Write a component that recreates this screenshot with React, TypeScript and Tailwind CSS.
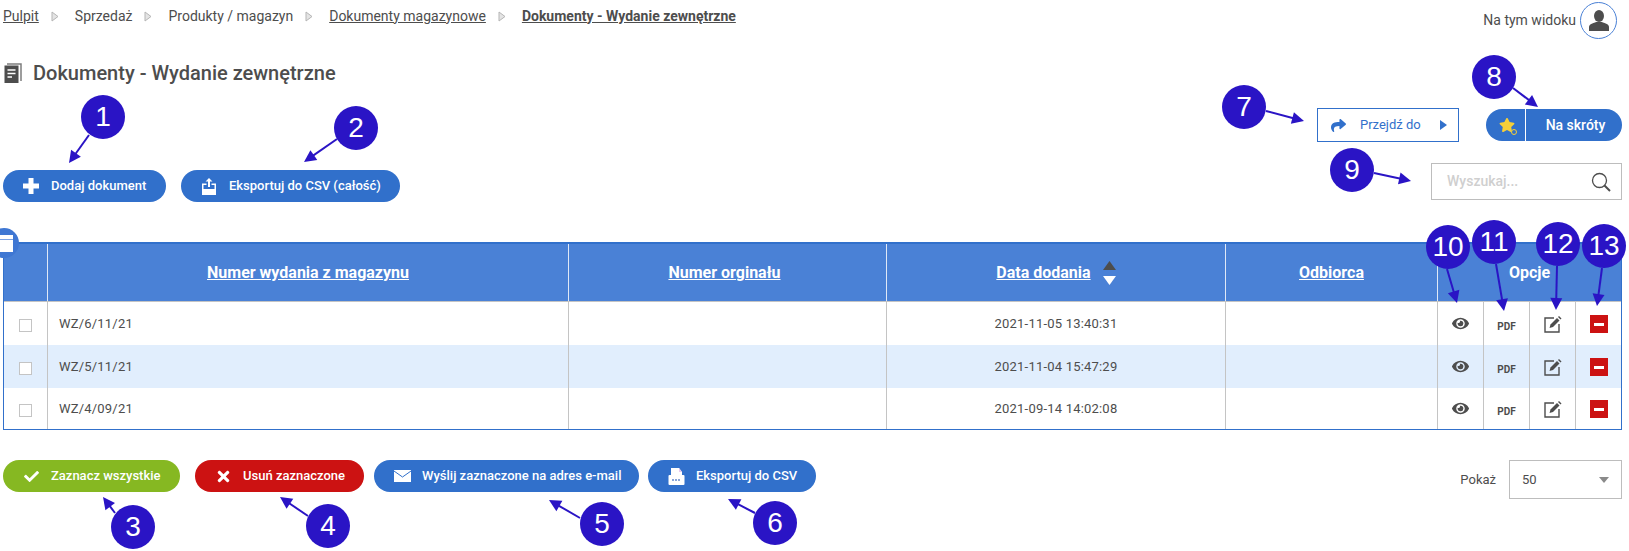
import React from "react";
import { FaShare, FaEye, FaStar, FaCheck, FaTimes } from "react-icons/fa";

const Sep = () => (
  <svg width="8" height="11" viewBox="0 0 8 11" className="ml-[12px] mr-[16px] shrink-0">
    <path d="M1 1 L7 5.5 L1 10 Z" fill="#e4e4e4" stroke="#b5b5b5" strokeWidth="1" />
  </svg>
);

const Btn = ({ w, bg, icon, children }: { w: string; bg: string; icon: React.ReactNode; children: React.ReactNode }) => (
  <button className={`flex h-8 items-center rounded-full text-[13px] font-medium text-white ${w} ${bg}`}>
    <span className="flex w-[48px] shrink-0 items-center justify-center pl-[8px]">{icon}</span>
    <span className="whitespace-nowrap">{children}</span>
  </button>
);

const PlusIcon = () => (
  <svg width="16" height="16" viewBox="0 0 16 16" fill="white">
    <path d="M5.5 0 H10.5 V5.5 H16 V10.5 H10.5 V16 H5.5 V10.5 H0 V5.5 H5.5 Z" />
  </svg>
);

const ExportIcon = () => (
  <svg width="16" height="17" viewBox="0 0 16 17" fill="white">
    <path d="M8 0 L11.5 3.5 H9 V9 H7 V3.5 H4.5 Z" />
    <path d="M1 5.5 H5.5 V7 H2.5 V11 H13.5 V7 H10.5 V5.5 H15 V17 H1 Z" />
  </svg>
);

const MailIcon = () => (
  <svg width="17" height="12" viewBox="0 0 17 12">
    <rect width="17" height="12" fill="white" />
    <path d="M0 1 L8.5 7 L17 1" fill="none" stroke="#3170cb" strokeWidth="1" />
  </svg>
);

const CsvIcon = () => (
  <svg width="17" height="17" viewBox="0 0 17 17">
    <path d="M3 0 H11 L14 4 V7 H3 Z" fill="white" />
    <path d="M11 0 L14 4 H11 Z" fill="#e8c8ee" />
    <rect x="0.5" y="7" width="16" height="10" rx="1" fill="white" />
    <path d="M4 12 H13" stroke="#8aa6d8" strokeWidth="2" strokeDasharray="2 1" />
  </svg>
);

const BookIcon = () => (
  <svg width="18" height="20" viewBox="0 0 18 20" className="shrink-0">
    <path d="M3 1 H17 V18" fill="none" stroke="#7d7d7d" strokeWidth="1.5" />
    <rect x="0.5" y="2.5" width="14" height="17.5" fill="#4d4d4d" />
    <path d="M3.5 7 H11.5 M3.5 10.5 H11.5 M3.5 14 H8" stroke="white" strokeWidth="1.3" />
  </svg>
);

const EditIcon = () => (
  <svg width="18" height="17" viewBox="0 0 18 17">
    <path d="M10 2 H1 V16 H15 V8" fill="none" stroke="#4d4d4d" strokeWidth="1.4" />
    <path d="M5.5 12 L6.5 8.5 L13 2 L15.5 4.5 L9 11 Z" fill="#4d4d4d" />
    <path d="M14 1 L15 0 L17.5 2.5 L16.5 3.5 Z" fill="#4d4d4d" />
  </svg>
);

const MinusIcon = () => (
  <span className="flex h-[18px] w-[18px] items-center justify-center bg-[#cc1212]">
    <span className="h-[3px] w-[10px] bg-white" />
  </span>
);

type BadgeDef = { n: number; cx: number; cy: number; from: [number, number]; to: [number, number] };
const badges: BadgeDef[] = [
  { n: 1, cx: 103, cy: 117, from: [89, 135], to: [69, 163] },
  { n: 2, cx: 356, cy: 128, from: [337, 139], to: [304, 162] },
  { n: 3, cx: 133, cy: 527, from: [115, 513], to: [103, 497] },
  { n: 4, cx: 328, cy: 526, from: [308, 516], to: [280, 497] },
  { n: 5, cx: 602, cy: 524, from: [580, 518], to: [549, 500] },
  { n: 6, cx: 775, cy: 523, from: [755, 513], to: [728, 499] },
  { n: 7, cx: 1244, cy: 107, from: [1266, 111], to: [1304, 121] },
  { n: 8, cx: 1494, cy: 77, from: [1513, 88], to: [1538, 107] },
  { n: 9, cx: 1352, cy: 170, from: [1374, 173], to: [1411, 181] },
  { n: 10, cx: 1448, cy: 247, from: [1447, 269], to: [1457, 303] },
  { n: 11, cx: 1494, cy: 242, from: [1496, 264], to: [1504, 311] },
  { n: 12, cx: 1558, cy: 244, from: [1557, 266], to: [1556, 310] },
  { n: 13, cx: 1604, cy: 246, from: [1602, 268], to: [1597, 306] },
];

const head = (from: [number, number], to: [number, number]) => {
  const dx = to[0] - from[0];
  const dy = to[1] - from[1];
  const l = Math.hypot(dx, dy);
  const ux = dx / l;
  const uy = dy / l;
  const bx = to[0] - ux * 12;
  const by = to[1] - uy * 12;
  return `${to[0]},${to[1]} ${bx - uy * 6},${by + ux * 6} ${bx + uy * 6},${by - ux * 6}`;
};

const Overlay = () => (
  <>
    <svg width="1629" height="551" className="pointer-events-none absolute left-0 top-0">
      {badges.map((b) => {
        const dx = b.to[0] - b.from[0];
        const dy = b.to[1] - b.from[1];
        const l = Math.hypot(dx, dy);
        return (
          <g key={b.n}>
            <line
              x1={b.from[0]}
              y1={b.from[1]}
              x2={b.to[0] - (dx / l) * 8}
              y2={b.to[1] - (dy / l) * 8}
              stroke="#2a14c5"
              strokeWidth="2"
            />
            <polygon points={head(b.from, b.to)} fill="#2a14c5" />
          </g>
        );
      })}
    </svg>
    {badges.map((b) => (
      <div
        key={b.n}
        className="absolute flex h-[44px] w-[44px] items-center justify-center rounded-full bg-[#2a14c5] text-[28px] leading-none text-white"
        style={{ left: b.cx - 22, top: b.cy - 22, fontFamily: '"Liberation Sans", sans-serif' }}
      >
        {b.n}
      </div>
    ))}
  </>
);

const rowsData = [
  { no: "WZ/6/11/21", date: "2021-11-05 13:40:31", bg: "bg-white", h: "h-[43px]" },
  { no: "WZ/5/11/21", date: "2021-11-04 15:47:29", bg: "bg-[#e1eefd]", h: "h-[43px]" },
  { no: "WZ/4/09/21", date: "2021-09-14 14:02:08", bg: "bg-white", h: "h-[41px]" },
];

const cols = "grid grid-cols-[44px_521px_318px_339px_212px_46px_46px_46px_45px]";
const cell = "flex items-center justify-center border-r border-[#c4c4c4]";
const th = "flex items-center justify-center border-r border-[#dfe8f7] text-[16px] font-bold text-white underline";

export default function App() {
  return (
    <div
      className="relative h-[551px] w-[1629px] overflow-hidden bg-white text-[#4d4d4d]"
      style={{ fontFamily: 'Roboto, "Liberation Sans", sans-serif' }}
    >
      {/* top bar */}
      <div className="flex h-[39px] items-start justify-between pl-[3px] pr-[12px] pt-[2px]">
        <nav className="flex h-[28px] items-center text-[14px]">
          <span className="underline">Pulpit</span>
          <Sep />
          <span>Sprzedaż</span>
          <Sep />
          <span>Produkty / magazyn</span>
          <Sep />
          <span className="underline">Dokumenty magazynowe</span>
          <Sep />
          <span className="font-bold underline">Dokumenty - Wydanie zewnętrzne</span>
        </nav>
        <div className="flex items-center gap-[4px]">
          <span className="text-[14px]">Na tym widoku</span>
          <span className="flex h-[37px] w-[37px] items-center justify-center rounded-full border border-[#4a81d6]">
            <svg width="20" height="21" viewBox="0 0 20 21" fill="#4d4d4d">
              <ellipse cx="10" cy="6" rx="5" ry="6" />
              <path d="M0 21 V17 C0 14 5 13 7 12 H13 C15 13 20 14 20 17 V21 Z" />
            </svg>
          </span>
        </div>
      </div>

      {/* title, actions */}
      <div className="flex justify-between pl-[3px] pr-[7px]">
        <div>
          <div className="mt-[19px] flex h-[30px] items-center gap-[11px] pl-[1px]">
            <BookIcon />
            <h1 className="text-[20px] font-medium">Dokumenty - Wydanie zewnętrzne</h1>
          </div>
          <div className="mt-[82px] flex gap-[15px]">
            <Btn w="w-[163px]" bg="bg-[#3170cb]" icon={<PlusIcon />}>Dodaj dokument</Btn>
            <Btn w="w-[219px]" bg="bg-[#3170cb]" icon={<ExportIcon />}>Eksportuj do CSV (całość)</Btn>
          </div>
        </div>
        <div className="flex flex-col items-end">
          <div className="mt-[69px] flex items-center gap-[27px]">
            <button className="flex h-[34px] w-[142px] items-center border border-[#3170cb] pl-[13px] text-[13px] text-[#3170cb]">
              <FaShare size={15} color="#3170cb" />
              <span className="ml-[14px]">Przejdź do</span>
              <svg width="7" height="10" viewBox="0 0 7 10" className="ml-[19px]" fill="#3170cb">
                <path d="M0 0 L7 5 L0 10 Z" />
              </svg>
            </button>
            <button className="flex h-8 w-[136px] items-center rounded-full bg-[#3170cb] text-[14px] font-medium text-white">
              <span className="flex h-full w-[40px] items-center justify-center border-r border-white pl-[3px]">
                <span className="relative">
                  <FaStar size={16} color="#f5cf38" />
                  <span className="absolute -bottom-[2px] -right-[2px] h-[6px] w-[6px] rounded-full border border-[#f5cf38] bg-[#3170cb]" />
                </span>
              </span>
              <span className="flex-1 pl-[3px] text-center">Na skróty</span>
            </button>
          </div>
          <div className="mt-[21px] flex h-[37px] w-[191px] items-center justify-between border border-[#bdbdbd] pl-[15px] pr-[10px]">
            <span className="text-[14px] font-medium text-[#cfcfcf]">Wyszukaj...</span>
            <svg width="20" height="20" viewBox="0 0 20 20" fill="none" stroke="#4d4d4d">
              <circle cx="8.5" cy="8.5" r="7" strokeWidth="1.3" />
              <path d="M13.5 13.5 L19 19" strokeWidth="2" />
            </svg>
          </div>
        </div>
      </div>

      {/* table */}
      <div className="relative ml-[3px] mt-[40px] w-[1619px] border border-t-2 border-[#3170cb]">
        <div className={`${cols} h-[58px] border-b border-[#c4c4c4] bg-[#4a81d6]`}>
          <div className={th} />
          <div className={th}>Numer wydania z magazynu</div>
          <div className={`${th} pr-[6px]`}>Numer orginału</div>
          <div className={th}>
            <span>Data dodania</span>
            <span className="ml-[12px] flex flex-col items-center gap-[4px] no-underline">
              <svg width="13" height="10" viewBox="0 0 13 10" fill="#4d4d4d"><path d="M6.5 0 L13 9 H0 Z" /></svg>
              <svg width="13" height="10" viewBox="0 0 13 10" fill="white"><path d="M0 1 H13 L6.5 10 Z" /></svg>
            </span>
          </div>
          <div className={th}>Odbiorca</div>
          <div className="col-span-4 flex items-center justify-center text-[16px] font-bold text-white">Opcje</div>
        </div>
        {rowsData.map((r) => (
          <div key={r.no} className={`${cols} ${r.h} ${r.bg} text-[13px]`}>
            <div className={`${cell} pt-[3px]`}>
              <span className="h-[13px] w-[13px] border border-[#c4c4c4] bg-white" />
            </div>
            <div className={`${cell} !justify-start pl-[11px] tracking-[0.2px]`}>{r.no}</div>
            <div className={cell} />
            <div className={`${cell} tracking-[0.2px]`}>{r.date}</div>
            <div className={cell} />
            <div className={cell}><FaEye size={17} color="#4d4d4d" /></div>
            <div className={`${cell} pt-[6px] text-[10px] font-bold`}>PDF</div>
            <div className={`${cell} pt-[1px]`}><EditIcon /></div>
            <div className="flex items-center justify-center pt-[1px]"><MinusIcon /></div>
          </div>
        ))}
        <div className="absolute -left-[15px] -top-[16px] flex h-[30px] w-[30px] items-center justify-end rounded-full bg-[#3f77d3] pr-[6px]">
          <span className="flex h-[17px] w-[13px] flex-col bg-white">
            <span className="mt-[4px] h-px bg-[#7da3e3]" />
          </span>
        </div>
      </div>

      {/* footer */}
      <div className="mt-[30px] flex items-start justify-between pl-[3px] pr-[7px]">
        <div className="flex">
          <Btn w="w-[177px]" bg="bg-[#86b822]" icon={<FaCheck size={15} color="white" />}>Zaznacz wszystkie</Btn>
          <div className="ml-[15px]">
            <Btn w="w-[169px]" bg="bg-[#cc1212]" icon={<FaTimes size={17} color="white" />}>Usuń zaznaczone</Btn>
          </div>
          <div className="ml-[10px]">
            <Btn w="w-[265px]" bg="bg-[#3170cb]" icon={<MailIcon />}>Wyślij zaznaczone na adres e-mail</Btn>
          </div>
          <div className="ml-[9px]">
            <Btn w="w-[168px]" bg="bg-[#3170cb]" icon={<CsvIcon />}>Eksportuj do CSV</Btn>
          </div>
        </div>
        <div className="flex items-center gap-[13px]">
          <span className="text-[13px]">Pokaż</span>
          <div className="flex h-[39px] w-[113px] items-center justify-between border border-[#bdbdbd] pl-[12px] pr-[12px] text-[13px]">
            <span>50</span>
            <svg width="10" height="6" viewBox="0 0 10 6" fill="#8a8a8a"><path d="M0 0 H10 L5 6 Z" /></svg>
          </div>
        </div>
      </div>

      <Overlay />
    </div>
  );
}
